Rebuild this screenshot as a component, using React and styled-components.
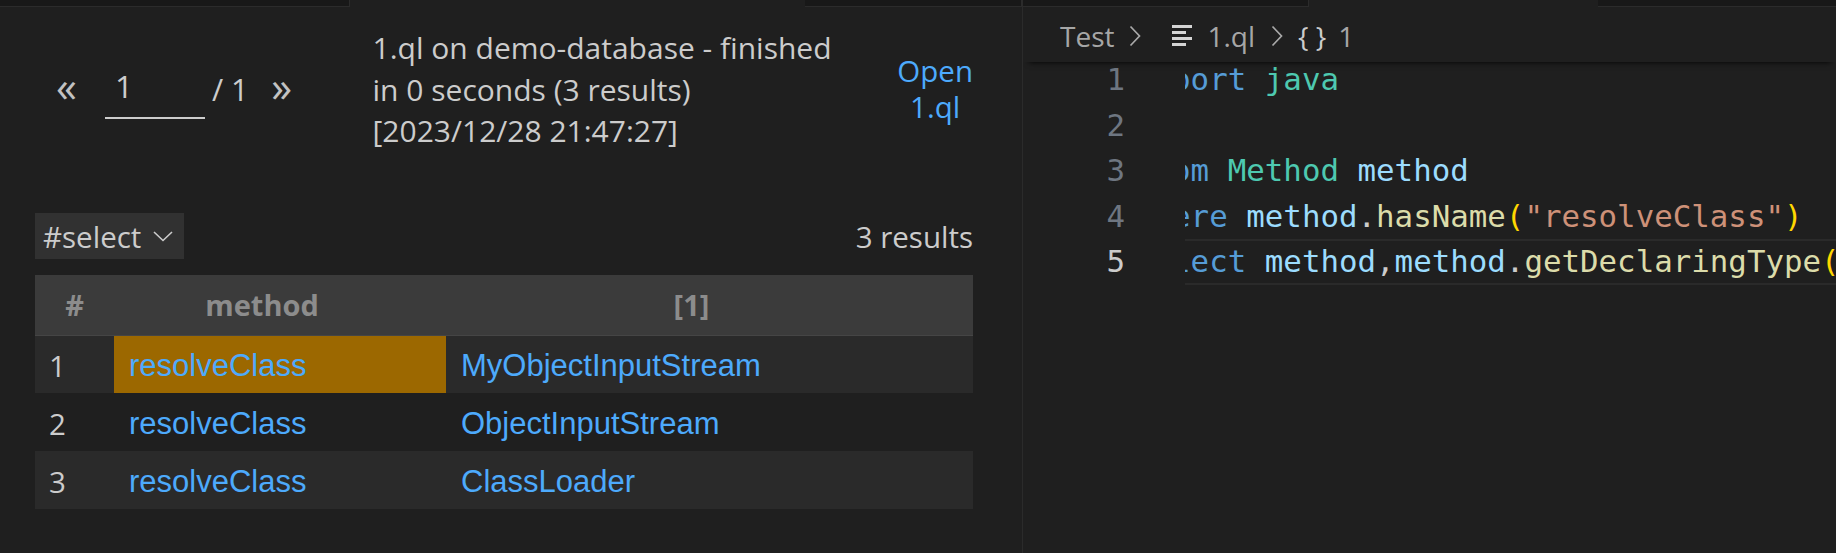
import React from "react"
import styled, { createGlobalStyle } from "styled-components"

const GlobalStyle = createGlobalStyle`
  html, body {
    margin: 0;
    padding: 0;
    background: #1f1f1f;
  }
  body {
    width: 1836px;
    height: 553px;
    overflow: hidden;
    font-family: "Open Sans", "Noto Sans", sans-serif;
    color: #cccccc;
  }
`

const Workbench = styled.div`
  display: flex;
  width: 1836px;
  height: 553px;
  background: #1f1f1f;
`

const Pane = styled.section`
  display: flex;
  flex-direction: column;
  width: ${(p) => p.$width}px;
  flex-shrink: 0;
  border-left: ${(p) => (p.$divider ? "1px solid #2b2b2b" : "none")};
  overflow: hidden;
`

const TabStrip = styled.div`
  display: flex;
  height: 7px;
  flex-shrink: 0;
`

const Tab = styled.div`
  box-sizing: border-box;
  height: 7px;
  width: ${(p) => (p.$width ? `${p.$width}px` : "auto")};
  flex: ${(p) => (p.$width ? "none" : "1")};
  background: ${(p) => (p.$active ? "#1f1f1f" : "#181818")};
  border-bottom: ${(p) => (p.$active ? "none" : "1px solid #2b2b2b")};
  border-right: ${(p) => (p.$active ? "none" : "1px solid #2b2b2b")};
`

/* ---------- results view ---------- */

const Results = styled.div`
  display: flex;
  flex-direction: column;
  padding: 0 49px 0 35px;
`

const HeaderRow = styled.div`
  display: flex;
  align-items: center;
  margin-top: 20px;
`

const Pager = styled.div`
  display: flex;
  align-items: center;
  margin-left: 19.5px;
`

const NavButton = styled.span`
  width: 24px;
  text-align: center;
  font-size: 42px;
  color: #c2c2c2;
  margin-bottom: 7px;
  margin-left: ${(p) => p.$gap || 0}px;
`

const PageInput = styled.input`
  box-sizing: border-box;
  width: 100px;
  height: 60px;
  margin-left: 26.5px;
  padding: 0 0 6px 10px;
  background: transparent;
  border: none;
  border-bottom: 2px solid #cccccc;
  outline: none;
  color: #cccccc;
  font-family: "Open Sans", sans-serif;
  font-size: 31.5px;
`

const PageTotal = styled.span`
  margin-left: 7px;
  font-size: 30.5px;
  color: #cccccc;
`

const Status = styled.div`
  margin-left: 79px;
  font-size: 30px;
  line-height: 41.5px;
  color: #cccccc;
`

const OpenLink = styled.a`
  margin-left: auto;
  width: min-content;
  text-align: center;
  font-size: 29.5px;
  line-height: 36.5px;
  color: #4daafc;
  text-decoration: none;
`

const SelectRow = styled.div`
  display: flex;
  align-items: center;
  justify-content: space-between;
  margin-top: 61.5px;
  height: 46px;
`

const ResultSetSelect = styled.div`
  display: flex;
  align-items: center;
  gap: 12px;
  height: 46px;
  padding: 0 11px 0 8px;
  background: #313131;
  font-size: 29.5px;
  color: #cccccc;
`

const ResultCount = styled.span`
  font-size: 29.5px;
  color: #cccccc;
`

const Table = styled.table`
  margin-top: 16px;
  width: 938px;
  border-collapse: collapse;
  table-layout: fixed;
`

const HeadCell = styled.th`
  box-sizing: border-box;
  height: 60px;
  padding: 0 ${(p) => p.$offset || 0}px 0 0;
  background: #3b3b3b;
  border-bottom: 1px solid #454545;
  color: #8c8c8c;
  font-family: "Open Sans", sans-serif;
  font-size: 29px;
  font-weight: 700;
  text-align: center;
`

const Row = styled.tr`
  background: ${(p) => (p.$striped ? "#2a2a2a" : "transparent")};
`

const IndexCell = styled.td`
  box-sizing: border-box;
  height: 58px;
  padding: 2px 0 0 14px;
  font-family: "Open Sans", sans-serif;
  font-size: 29.5px;
  color: #cccccc;
`

const ValueCell = styled.td`
  box-sizing: border-box;
  height: 58px;
  padding: 3px 0 0 ${(p) => p.$pad}px;
  background: ${(p) => (p.$selected ? "#9c6800" : "transparent")};
  font-family: "Liberation Sans", Arial, sans-serif;
  font-size: 31px;
  white-space: nowrap;
`

const ValueLink = styled.a`
  color: #4daafc;
  text-decoration: none;
`

/* ---------- editor ---------- */

const Breadcrumbs = styled.div`
  position: relative;
  z-index: 1;
  display: flex;
  align-items: center;
  height: 55px;
  padding: 2px 0 0 37px;
  box-sizing: border-box;
  flex-shrink: 0;
  background: #1f1f1f;
  box-shadow: 0 6px 6px -6px #000000;
  font-size: 28px;
  color: rgba(204, 204, 204, 0.8);
`

const Crumb = styled.span`
  display: flex;
  align-items: center;
  margin-left: ${(p) => p.$gap || 0}px;
  color: ${(p) => p.$color || "inherit"};
`

const Editor = styled.div`
  display: flex;
  flex: 1;
  overflow: hidden;
`

const Gutter = styled.div`
  box-sizing: border-box;
  width: 162px;
  flex-shrink: 0;
  padding-right: 60px;
  margin-top: -5px;
`

const LineNumber = styled.div`
  height: 45.6px;
  line-height: 45.6px;
  text-align: right;
  font-family: "DejaVu Sans Mono", monospace;
  font-size: 30.8px;
  color: ${(p) => (p.$current ? "#cccccc" : "#6e7681")};
`

const CodeView = styled.div`
  flex: 1;
  overflow: hidden;
  margin-top: -5px;
`

const CodeLines = styled.div`
  margin-left: -50px;
  width: calc(100% + 50px);
`

const CodeLine = styled.div`
  height: 45.6px;
  line-height: 45.6px;
  white-space: pre;
  font-family: "DejaVu Sans Mono", monospace;
  font-size: 30.8px;
  color: #cccccc;
  box-shadow: ${(p) =>
    p.$current ? "inset 0 2px #2a2a2a, inset 0 -2px #2a2a2a" : "none"};
`

const tokenColors = {
  kw: "#569cd6",
  type: "#4ec9b0",
  var: "#9cdcfe",
  func: "#dcdcaa",
  str: "#ce9178",
  b1: "#ffd700",
  b2: "#da70d6",
  plain: "#cccccc",
}

const Token = styled.span`
  color: ${(p) => tokenColors[p.$kind]};
`

const ChevronRight = () => (
  <svg width="12" height="22" viewBox="0 0 12 22" fill="none">
    <path d="M1.5 1.5 L10.5 11 L1.5 20.5" stroke="#a9a9a9" strokeWidth="1.7" />
  </svg>
)

const ChevronDown = () => (
  <svg width="20" height="11" viewBox="0 0 20 11" fill="none">
    <path d="M1 1 L10 9.5 L19 1" stroke="#cccccc" strokeWidth="1.6" />
  </svg>
)

const LinesIcon = () => (
  <svg width="20" height="21" viewBox="0 0 20 21" fill="#d4d4d4">
    <rect x="0" y="0" width="20" height="3" />
    <rect x="0" y="6" width="14" height="3" />
    <rect x="0" y="12" width="20" height="3" />
    <rect x="0" y="18" width="14" height="3" />
  </svg>
)

const rows = [
  ["resolveClass", "MyObjectInputStream"],
  ["resolveClass", "ObjectInputStream"],
  ["resolveClass", "ClassLoader"],
]

const code = [
  [["kw", "import"], ["plain", " "], ["type", "java"]],
  [],
  [["kw", "from"], ["plain", " "], ["type", "Method"], ["plain", " "], ["var", "method"]],
  [
    ["kw", "where"], ["plain", " "], ["var", "method"], ["plain", "."],
    ["func", "hasName"], ["b1", "("], ["str", "\"resolveClass\""], ["b1", ")"],
  ],
  [
    ["kw", "select"], ["plain", " "], ["var", "method"], ["plain", ","],
    ["var", "method"], ["plain", "."], ["func", "getDeclaringType"],
    ["b1", "("], ["b2", "()"], ["b1", ")"],
  ],
]

const currentLine = 5

export default function App() {
  return (
    <>
      <GlobalStyle />
      <Workbench>
        <Pane $width={1022}>
          <TabStrip>
            <Tab $width={350} />
            <Tab $width={455} $active />
            <Tab />
          </TabStrip>
          <Results>
            <HeaderRow>
              <Pager>
                <NavButton>«</NavButton>
                <PageInput defaultValue="1" readOnly />
                <PageTotal>/ 1</PageTotal>
                <NavButton $gap={21}>»</NavButton>
              </Pager>
              <Status>
                1.ql on demo-database - finished
                <br />
                in 0 seconds (3 results)
                <br />
                [2023/12/28 21:47:27]
              </Status>
              <OpenLink href="#">Open 1.ql</OpenLink>
            </HeaderRow>
            <SelectRow>
              <ResultSetSelect>
                #select
                <ChevronDown />
              </ResultSetSelect>
              <ResultCount>3 results</ResultCount>
            </SelectRow>
            <Table>
              <colgroup>
                <col style={{ width: 79 }} />
                <col style={{ width: 332 }} />
                <col style={{ width: 527 }} />
              </colgroup>
              <thead>
                <tr>
                  <HeadCell>#</HeadCell>
                  <HeadCell $offset={36}>method</HeadCell>
                  <HeadCell $offset={36}>[1]</HeadCell>
                </tr>
              </thead>
              <tbody>
                {rows.map(([method, type], i) => (
                  <Row key={i} $striped={i % 2 === 0}>
                    <IndexCell>{i + 1}</IndexCell>
                    <ValueCell $pad={15} $selected={i === 0}>
                      <ValueLink href="#">{method}</ValueLink>
                    </ValueCell>
                    <ValueCell $pad={15}>
                      <ValueLink href="#">{type}</ValueLink>
                    </ValueCell>
                  </Row>
                ))}
              </tbody>
            </Table>
          </Results>
        </Pane>

        <Pane $width={814} $divider>
          <TabStrip>
            <Tab $width={286} />
            <Tab $width={289} $active />
            <Tab />
          </TabStrip>
          <Breadcrumbs>
            <Crumb>Test</Crumb>
            <Crumb $gap={15}>
              <ChevronRight />
            </Crumb>
            <Crumb $gap={31}>
              <LinesIcon />
            </Crumb>
            <Crumb $gap={15}>1.ql</Crumb>
            <Crumb $gap={16}>
              <ChevronRight />
            </Crumb>
            <Crumb $gap={15} $color="#cccccc">{"{ }"}</Crumb>
            <Crumb $gap={12}>1</Crumb>
          </Breadcrumbs>
          <Editor>
            <Gutter>
              {code.map((_, i) => (
                <LineNumber key={i} $current={i + 1 === currentLine}>
                  {i + 1}
                </LineNumber>
              ))}
            </Gutter>
            <CodeView>
              <CodeLines>
                {code.map((tokens, i) => (
                  <CodeLine key={i} $current={i + 1 === currentLine}>
                    {tokens.map(([kind, text], j) => (
                      <Token key={j} $kind={kind}>
                        {text}
                      </Token>
                    ))}
                  </CodeLine>
                ))}
              </CodeLines>
            </CodeView>
          </Editor>
        </Pane>
      </Workbench>
    </>
  )
}
